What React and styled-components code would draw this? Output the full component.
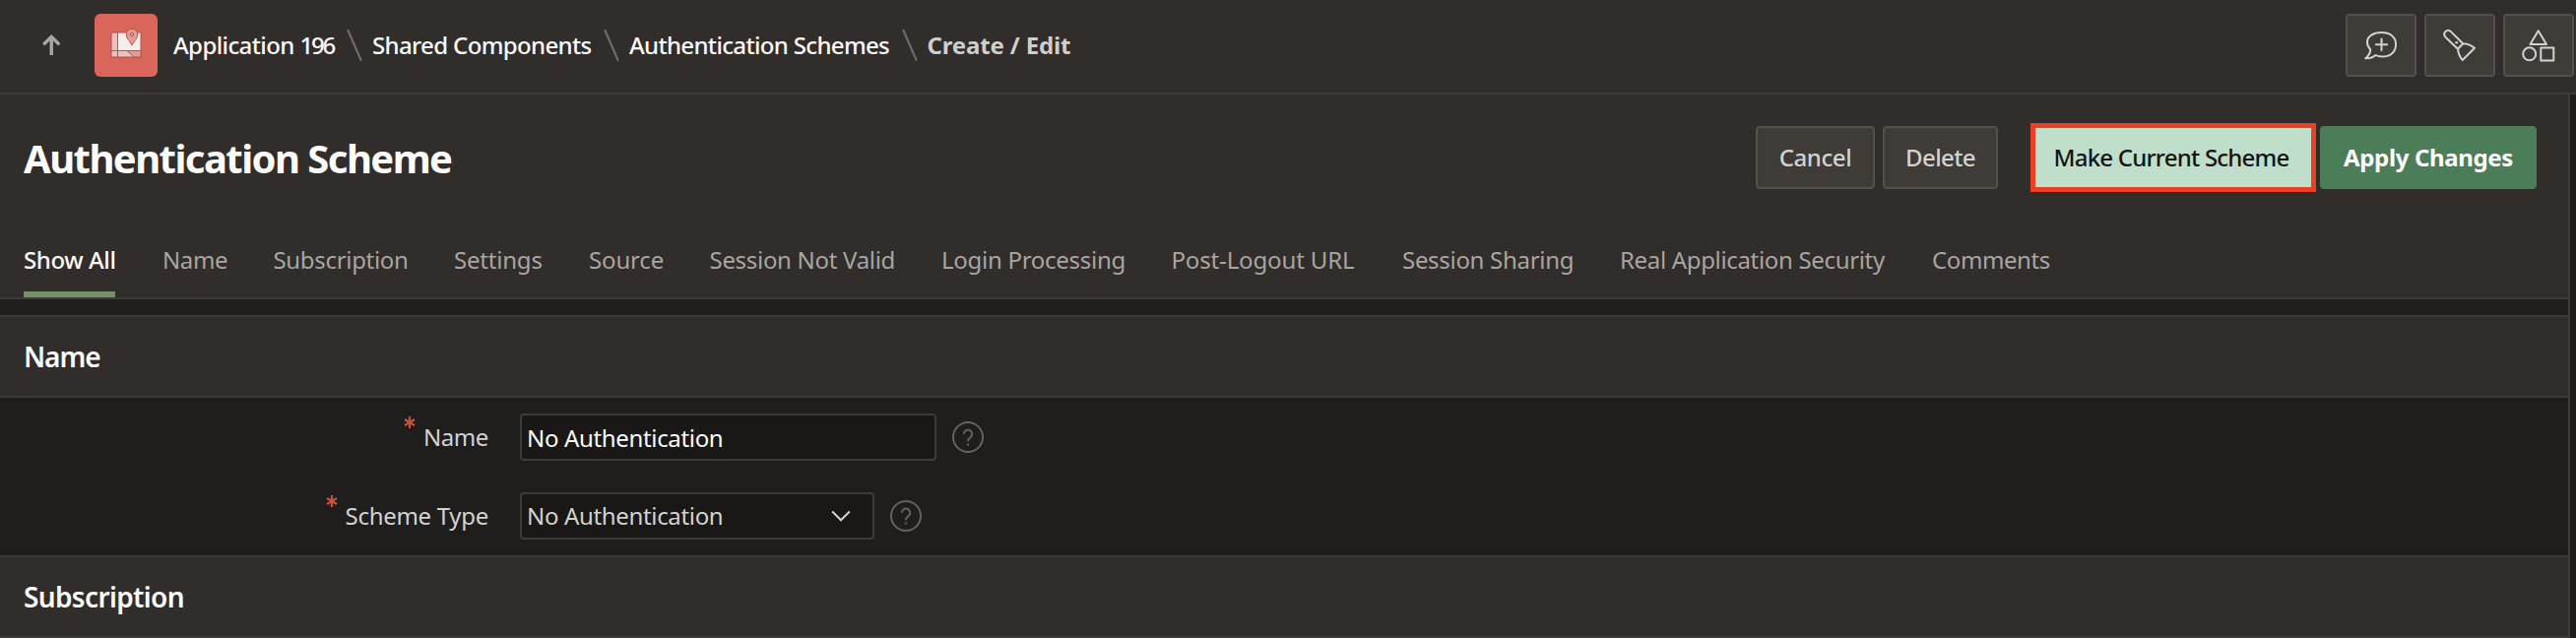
import React from "react";
import styled, { createGlobalStyle } from "styled-components";

const c = {
  bar: "#312d2a",
  page: "#201e1c",
  field: "#191816",
  line: "#3e3a36",
  lineGreen: "#3c3b35",
  text: "#fcfbfa",
  soft: "#d4d2cf",
  muted: "#a8a5a2",
};

const GlobalStyle = createGlobalStyle`
  *, *::before, *::after { box-sizing: border-box; }
  body {
    margin: 0;
    background: ${c.page};
    color: ${c.text};
    font-family: "Noto Sans", "Open Sans", sans-serif;
    font-size: 24px;
  }
`;

const Page = styled.div`
  height: 648px;
  overflow: hidden;
  display: flex;
  flex-direction: column;
`;

const Header = styled.header`
  height: 96px;
  flex: none;
  display: flex;
  align-items: flex-start;
  justify-content: space-between;
  padding: 14px 2px 0 40px;
  background: ${c.bar};
  border-bottom: 2px solid ${c.line};
`;

const HeaderNav = styled.nav`
  display: flex;
  align-items: center;
  height: 64px;
`;

const UpIcon = styled.svg`
  width: 24px;
  height: 24px;
  margin-right: 32px;
`;

const AppIcon = styled.div`
  width: 64px;
  height: 64px;
  margin-right: 16px;
  border-radius: 6px;
  background: #d9655b;
  svg { display: block; }
`;

const Crumb = styled.span`
  width: ${(p) => p.$w}px;
  padding-bottom: 1px;
  white-space: nowrap;
  font-weight: ${(p) => (p.$current ? 700 : 500)};
  color: ${(p) => (p.$current ? "#d0cecb" : c.text)};
  letter-spacing: ${(p) => p.$track}px;
`;

const CrumbNumber = styled.span`
  letter-spacing: -2.2px;
`;

const Separator = styled.svg`
  width: 16px;
  height: 34px;
  flex: none;
  margin: 0 10px 0 11px;
`;

const HeaderTools = styled.div`
  display: flex;
  gap: 8px;
`;

const ToolButton = styled.button`
  width: 72px;
  height: 64px;
  padding: 0;
  display: flex;
  align-items: center;
  justify-content: center;
  background: #3f3b36;
  border: 2px solid #55504b;
  border-radius: 4px;
  svg {
    width: 36px;
    height: 36px;
    fill: none;
    stroke: ${c.soft};
    stroke-width: 2;
    stroke-linejoin: round;
    stroke-linecap: round;
  }
`;

const Main = styled.main`
  flex: 1;
  width: 2610px;
  border-right: 2px solid ${c.lineGreen};
`;

const TitleBar = styled.section`
  height: 208px;
  background: ${c.bar};
  border-bottom: 2px solid ${c.lineGreen};
  padding: 0 32px 0 24px;
  display: flex;
  flex-direction: column;
  justify-content: space-between;
`;

const TitleRow = styled.div`
  height: 128px;
  display: flex;
  align-items: center;
  justify-content: space-between;
`;

const Title = styled.h1`
  margin: 0;
  padding-top: 2px;
  font-size: 40px;
  font-weight: 660;
  line-height: 48px;
  letter-spacing: -1.55px;
`;

const Actions = styled.div`
  display: flex;
  align-items: center;
`;

const Button = styled.button`
  width: ${(p) => p.$w}px;
  height: 64px;
  padding: 0;
  margin-left: ${(p) => p.$gap ?? 0}px;
  font: 500 24px/32px "Noto Sans", "Open Sans", sans-serif;
  letter-spacing: ${(p) => p.$track}px;
  white-space: nowrap;
  color: ${c.soft};
  background: #3f3b36;
  border: 2px solid #55504b;
  border-radius: 4px;
`;

const HighlightedButton = styled(Button)`
  height: 70px;
  padding-right: 4px;
  color: #161513;
  background: #bfdfcb;
  border: 5px solid #eb4026;
  border-radius: 0;
`;

const PrimaryButton = styled(Button)`
  font-weight: 700;
  color: #fff;
  background: #4b7e58;
  border: none;
`;

const Tabs = styled.div`
  display: flex;
  gap: 48px;
`;

const Tab = styled.div`
  width: ${(p) => p.$w}px;
  height: 78px;
  line-height: 32px;
  padding-top: 24px;
  white-space: nowrap;
  letter-spacing: ${(p) => p.$track}px;
  font-weight: ${(p) => (p.$active ? 500 : 400)};
  color: ${(p) => (p.$active ? c.text : c.muted)};
  border-bottom: 6px solid ${(p) => (p.$active ? "#759169" : "transparent")};
`;

const Region = styled.section`
  margin-top: ${(p) => p.$top ?? 0}px;
`;

const RegionTitle = styled.h2`
  height: 84px;
  margin: 0;
  padding: 0 24px;
  display: flex;
  align-items: center;
  font-size: 28px;
  font-weight: 640;
  letter-spacing: ${(p) => p.$track}px;
  background: ${c.bar};
  border-top: 2px solid ${c.lineGreen};
  border-bottom: 2px solid ${c.lineGreen};
`;

const Form = styled.div`
  height: 160px;
  padding: 16px 0;
  display: flex;
  flex-direction: column;
  gap: 32px;
`;

const FieldRow = styled.div`
  height: 48px;
  display: flex;
  align-items: center;
`;

const Label = styled.label`
  width: 496px;
  margin-right: 32px;
  display: flex;
  justify-content: flex-end;
  line-height: 46px;
  letter-spacing: ${(p) => p.$track}px;
  color: ${c.soft};
`;

const Required = styled.svg`
  width: 12px;
  height: 14px;
  margin: 1px 8px 0 0;
  stroke: #c4523c;
  stroke-width: 2.2;
`;

const Field = styled.div`
  width: ${(p) => p.$w}px;
  height: 48px;
  padding: ${(p) => p.$shift ?? 0}px 22px 0 5px;
  display: flex;
  align-items: center;
  justify-content: space-between;
  line-height: 42px;
  letter-spacing: -0.34px;
  color: ${(p) => p.$color};
  background: ${c.field};
  border: 2px solid ${c.lineGreen};
  border-radius: 4px;
`;

const Chevron = styled.svg`
  width: 20px;
  height: 12px;
  fill: none;
  stroke: ${c.soft};
  stroke-width: 2;
`;

const HelpIcon = styled.svg`
  width: 32px;
  height: 32px;
  margin-left: 16px;
  fill: none;
  stroke: #65625e;
  stroke-width: 2;
`;

const tabs = [
  ["Show All", 93, -0.4],
  ["Name", 64.5, -0.4],
  ["Subscription", 135.5, -0.32],
  ["Settings", 89, -0.2],
  ["Source", 74.5, -0.15],
  ["Session Not Valid", 187.5, -0.3],
  ["Login Processing", 185.5, -0.28],
  ["Post-Logout URL", 186.5, -0.15],
  ["Session Sharing", 173, -0.3],
  ["Real Application Security", 269, -0.33],
  ["Comments", 120, -0.4],
];

const Slash = () => (
  <Separator viewBox="0 0 16 34">
    <path d="M1.5 2 L14.5 32" stroke="#6f6b68" strokeWidth="2.2" strokeLinecap="round" />
  </Separator>
);

const Asterisk = () => (
  <Required viewBox="0 0 12 14">
    <path d="M6 1V13M1 4L11 10M11 4L1 10" />
  </Required>
);

const Help = () => (
  <HelpIcon viewBox="0 0 32 32">
    <circle cx="16" cy="16" r="15" />
    <path d="M11.8 12.8a4.2 4.2 0 1 1 6.8 3.3c-1.7 1.2-2.6 1.9-2.6 4.1M16 22.4v2.2" />
  </HelpIcon>
);

export default function App() {
  return (
    <Page>
      <GlobalStyle />
      <Header>
        <HeaderNav>
          <UpIcon viewBox="0 0 24 24" fill="none" stroke="#a9a6a3" strokeWidth="3.4">
            <path d="M12.2 22V4M4.2 11.2L12.2 3.4L20.2 11.2" />
          </UpIcon>
          <AppIcon>
            <svg width="64" height="64" viewBox="0 0 64 64" stroke="#b9544c" strokeWidth="1">
              <rect x="17" y="19" width="30" height="25" fill="#f8ecea" />
              <path d="M17 19H23.5V37.5H17Z" fill="#ecc0bc" />
              <path d="M17 37.5H47V44H17Z" fill="#ecc0bc" />
              <path d="M33 37.5H47V44H40.5Z" fill="#e19d97" />
              <path d="M23.5 37.5V44" />
              <path
                d="M38 15.3a5.8 5.8 0 0 0-5.8 5.8c0 3.7 3.8 6.7 5.8 10.9c2-4.2 5.8-7.2 5.8-10.9A5.8 5.8 0 0 0 38 15.3Z"
                fill="#e19d97"
              />
              <circle cx="38" cy="21" r="1.7" fill="#e19d97" />
            </svg>
          </AppIcon>
          <Crumb $w={165} $track={-0.6}>
            Application <CrumbNumber>196</CrumbNumber>
          </Crumb>
          <Slash />
          <Crumb $w={224} $track={-0.64}>Shared Components</Crumb>
          <Slash />
          <Crumb $w={265.5} $track={-0.66}>Authentication Schemes</Crumb>
          <Slash />
          <Crumb $current $w={150} $track={-0.15}>Create / Edit</Crumb>
        </HeaderNav>
        <HeaderTools>
          <ToolButton aria-label="Feedback">
            <svg viewBox="0 0 36 36">
              <path d="M7.2 22.2C4.9 19.9 4 17.5 4 15C4 8.5 10.3 5 18.5 5S33 9 33 17.2S27 29.5 19 29.5C16.5 29.5 14.3 29 12.6 28C9.5 30.7 6 31.5 2.2 31.3C4.6 29.3 7.4 26.5 7.2 22.2Z" />
              <path d="M18.5 11.5V23M12.8 17.2H24.2" />
            </svg>
          </ToolButton>
          <ToolButton aria-label="Search">
            <svg viewBox="0 0 36 36">
              <path d="M16 21.7L3.5 9.7C1.9 8 1.9 5.7 3.3 4.2C4.9 2.6 7.3 2.6 8.9 4.1L21.2 16.2M16 21.7L21.2 16.2C25 16.2 29 17.5 33 20.7L20.8 33C18 30 16.4 26 16 21.7Z" />
              <path d="M14.7 15.2h.1" strokeWidth="2.6" />
            </svg>
          </ToolButton>
          <ToolButton aria-label="Shared components">
            <svg viewBox="0 0 36 36">
              <path d="M17.7 3.2L26 17H9.5Z" />
              <circle cx="8.7" cy="26.8" r="6.5" />
              <rect x="20.3" y="20.5" width="13" height="13" />
            </svg>
          </ToolButton>
        </HeaderTools>
      </Header>
      <Main>
        <TitleBar>
          <TitleRow>
            <Title>Authentication Scheme</Title>
            <Actions>
              <Button $w={121} $track={-0.4}>Cancel</Button>
              <Button $w={117} $gap={8} $track={-0.6}>Delete</Button>
              <HighlightedButton $w={290} $gap={33} $track={-0.78}>
                Make Current Scheme
              </HighlightedButton>
              <PrimaryButton $w={220} $gap={4} $track={-0.36}>Apply Changes</PrimaryButton>
            </Actions>
          </TitleRow>
          <Tabs>
            {tabs.map(([name, width, track], i) => (
              <Tab key={name} $w={width} $track={track} $active={i === 0}>
                {name}
              </Tab>
            ))}
          </Tabs>
        </TitleBar>
        <Region $top={16}>
          <RegionTitle $track={-1.1}>Name</RegionTitle>
          <Form>
            <FieldRow>
              <Label $track={-0.4}>
                <Asterisk />
                Name
              </Label>
              <Field $w={423} $color={c.text} $shift={1}>No Authentication</Field>
              <Help />
            </FieldRow>
            <FieldRow>
              <Label $track={-0.3}>
                <Asterisk />
                Scheme Type
              </Label>
              <Field $w={360} $color={c.soft}>
                No Authentication
                <Chevron viewBox="0 0 20 12">
                  <path d="M1.2 1.5L10 10.3L18.8 1.5" />
                </Chevron>
              </Field>
              <Help />
            </FieldRow>
          </Form>
        </Region>
        <Region>
          <RegionTitle $track={-0.65}>Subscription</RegionTitle>
        </Region>
      </Main>
    </Page>
  );
}
